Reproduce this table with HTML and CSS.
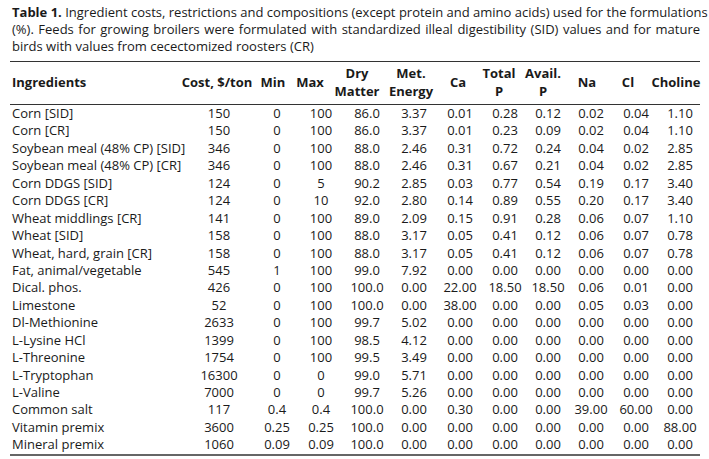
FILE: index.html
```html
<!DOCTYPE html>
<html>
<head>
<meta charset="utf-8">
<link rel="stylesheet" href="styles.css">
</head>
<body>
<div class="page">
  <div class="caption">
    <span class="cl"><b>Table 1.</b> Ingredient costs, restrictions and compositions (except protein and amino acids) used for the formulations</span>
    <span class="cl just">(%). Feeds for growing broilers were formulated with standardized illeal digestibility (SID) values and for mature</span>
    <span class="cl">birds with values from cecectomized roosters (CR)</span>
  </div>
  <div class="grid thead">
    <div class="th first">Ingredients</div>
    <div class="th c-cost">Cost, $/ton</div>
    <div class="th c-min">Min</div>
    <div class="th c-max">Max</div>
    <div class="th c-dry">Dry<br>Matter</div>
    <div class="th c-met">Met.<br>Energy</div>
    <div class="th c-ca">Ca</div>
    <div class="th c-tp">Total<br>P</div>
    <div class="th c-ap">Avail.<br>P</div>
    <div class="th c-na">Na</div>
    <div class="th c-cl">Cl</div>
    <div class="th c-ch">Choline</div>
  </div>
  <div class="grid tbody" id="tbody"></div>
</div>
<script src="script.js"></script>
</body>
</html>
```
FILE: script.js
```js
var rows = [
["Corn [SID]","150","0","100","86.0","3.37","0.01","0.28","0.12","0.02","0.04","1.10"],
["Corn [CR]","150","0","100","86.0","3.37","0.01","0.23","0.09","0.02","0.04","1.10"],
["Soybean meal (48% CP) [SID]","346","0","100","88.0","2.46","0.31","0.72","0.24","0.04","0.02","2.85"],
["Soybean meal (48% CP) [CR]","346","0","100","88.0","2.46","0.31","0.67","0.21","0.04","0.02","2.85"],
["Corn DDGS [SID]","124","0","5","90.2","2.85","0.03","0.77","0.54","0.19","0.17","3.40"],
["Corn DDGS [CR]","124","0","10","92.0","2.80","0.14","0.89","0.55","0.20","0.17","3.40"],
["Wheat middlings [CR]","141","0","100","89.0","2.09","0.15","0.91","0.28","0.06","0.07","1.10"],
["Wheat [SID]","158","0","100","88.0","3.17","0.05","0.41","0.12","0.06","0.07","0.78"],
["Wheat, hard, grain [CR]","158","0","100","88.0","3.17","0.05","0.41","0.12","0.06","0.07","0.78"],
["Fat, animal/vegetable","545","1","100","99.0","7.92","0.00","0.00","0.00","0.00","0.00","0.00"],
["Dical. phos.","426","0","100","100.0","0.00","22.00","18.50","18.50","0.06","0.01","0.00"],
["Limestone","52","0","100","100.0","0.00","38.00","0.00","0.00","0.05","0.03","0.00"],
["Dl-Methionine","2633","0","100","99.7","5.02","0.00","0.00","0.00","0.00","0.00","0.00"],
["L-Lysine HCl","1399","0","100","98.5","4.12","0.00","0.00","0.00","0.00","0.00","0.00"],
["L-Threonine","1754","0","100","99.5","3.49","0.00","0.00","0.00","0.00","0.00","0.00"],
["L-Tryptophan","16300","0","0","99.0","5.71","0.00","0.00","0.00","0.00","0.00","0.00"],
["L-Valine","7000","0","0","99.7","5.26","0.00","0.00","0.00","0.00","0.00","0.00"],
["Common salt","117","0.4","0.4","100.0","0.00","0.30","0.00","0.00","39.00","60.00","0.00"],
["Vitamin premix","3600","0.25","0.25","100.0","0.00","0.00","0.00","0.00","0.00","0.00","88.00"],
["Mineral premix","1060","0.09","0.09","100.0","0.00","0.00","0.00","0.00","0.00","0.00","0.00"]
];
var tb = document.getElementById("tbody");
rows.forEach(function (r) {
  r.forEach(function (v, i) {
    var d = document.createElement("div");
    d.className = i === 0 ? "td first" : "td";
    d.textContent = v;
    tb.appendChild(d);
  });
});
```
FILE: styles.css
```css
html, body {
  margin: 0;
  padding: 0;
  background: #ffffff;
}
body {
  font-family: "Open Sans", "Liberation Sans", sans-serif;
  font-size: 13px;
  color: #1a1a1a;
}
.page {
  width: 690px;
  padding: 4px 9px 0 10px;
}
.caption {
  padding-left: 2px;
  line-height: 17px;
  font-size: 13px;
}
.cl {
  display: block;
  white-space: nowrap;
}
.cl.just {
  white-space: normal;
  text-align: justify;
  text-align-last: justify;
}
.grid {
  display: grid;
  grid-template-columns: 180px 58px 58px 30px 62px 32px 60px 30px 56px 30px 60px 28px;
}
.thead {
  margin-top: 6px;
  border-top: 1px solid #333;
  border-bottom: 1px solid #333;
  height: 42px;
  align-items: center;
  font-weight: 700;
  line-height: 17.8px;
}
.th, .td {
  justify-self: center;
  width: max-content;
  text-align: center;
  white-space: nowrap;
}
.th.first, .td.first {
  justify-self: start;
  padding-left: 2px;
  text-align: left;
}
.c-cost { margin-right: 4px; }
.c-min { margin-right: 8px; }
.c-max { margin-right: 22px; }
.c-dry { margin-right: 20px; }
.c-met { margin-right: 6px; }
.c-ca { margin-right: 4px; }
.c-tp { margin-right: 12px; }
.c-ap { margin-right: 10px; }
.c-na { margin-right: 8px; }
.c-cl { margin-right: 16px; }
.c-ch { margin-right: 8px; }
.tbody {
  grid-auto-rows: 17.45px;
  line-height: 17.45px;
  border-bottom: 2px solid #666;
}
```
